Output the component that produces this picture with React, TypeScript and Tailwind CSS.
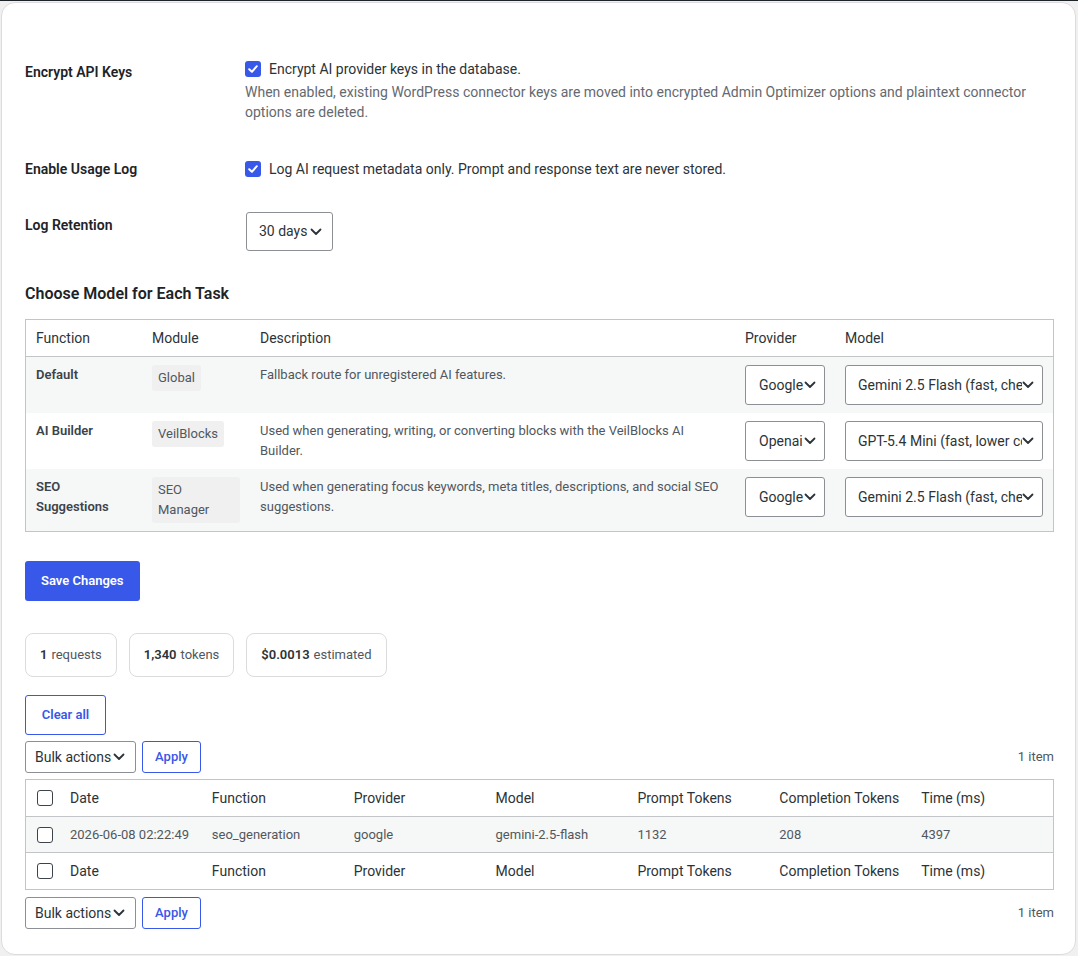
import React from "react";

const font = { fontFamily: "Roboto, 'Noto Sans', sans-serif" };

function Chevron() {
  return (
    <svg width="12" height="8" viewBox="0 0 12 8" className="shrink-0">
      <path d="M1.5 1.5 L6 6 L10.5 1.5" fill="none" stroke="#2c3338" strokeWidth="1.8" strokeLinecap="round" strokeLinejoin="round" />
    </svg>
  );
}

function Checked() {
  return (
    <span className="flex h-[16px] w-[16px] shrink-0 items-center justify-center rounded-[3px] bg-[#3858e9]">
      <svg width="12" height="12" viewBox="0 0 12 12">
        <path d="M2.2 6.2 L4.9 8.8 L9.8 3.2" fill="none" stroke="#fff" strokeWidth="2" strokeLinecap="round" strokeLinejoin="round" />
      </svg>
    </span>
  );
}

function Box() {
  return <span className="block h-[16px] w-[16px] shrink-0 rounded-[3px] border border-[#3c434a] bg-white" />;
}

function Select({ value, className }: { value: string; className: string }) {
  return (
    <div className={`flex items-center rounded-[3px] border border-[#8c8f94] bg-white text-[14px] text-[#2c3338] ${className}`}>
      <span className="min-w-0 flex-1 overflow-hidden whitespace-nowrap">{value}</span>
      <Chevron />
    </div>
  );
}

const models = [
  { fn: "Default", mod: "Global", desc: "Fallback route for unregistered AI features.", prov: "Google", model: "Gemini 2.5 Flash (fast, cheap)", bg: "bg-[#f6f7f7]" },
  { fn: "AI Builder", mod: "VeilBlocks", desc: "Used when generating, writing, or converting blocks with the VeilBlocks AI Builder.", prov: "Openai", model: "GPT-5.4 Mini (fast, lower cost)", bg: "bg-white" },
  { fn: "SEO Suggestions", mod: "SEO Manager", desc: "Used when generating focus keywords, meta titles, descriptions, and social SEO suggestions.", prov: "Google", model: "Gemini 2.5 Flash (fast, cheap)", bg: "bg-[#f6f7f7]" },
];

const logCols = ["Date", "Function", "Provider", "Model", "Prompt Tokens", "Completion Tokens", "Time (ms)"];
const logRow = ["2026-06-08 02:22:49", "seo_generation", "google", "gemini-2.5-flash", "1132", "208", "4397"];

function BulkBar() {
  return (
    <div className="flex items-center gap-[6px]">
      <Select value="Bulk actions" className="h-[32px] w-[111px] pl-[9px] pr-[10px]" />
      <button className="h-[32px] w-[59px] rounded-[3px] border border-[#3858e9] bg-white text-[13px] font-medium text-[#3858e9]">Apply</button>
      <span className="ml-auto text-[13px] text-[#50575e]">1 item</span>
    </div>
  );
}

function LogHeader({ className }: { className: string }) {
  return (
    <div className={`grid grid-cols-[34px_repeat(7,1fr)] items-center text-[14px] text-[#2c3338] ${className}`}>
      <div className="pl-[11px]"><Box /></div>
      {logCols.map((c) => (
        <div key={c} className="pl-[10px]">{c}</div>
      ))}
    </div>
  );
}

export default function App() {
  return (
    <div className="min-h-[956px] bg-[#f0f0f1]" style={font}>
      <div className="h-[1px] bg-[#1d2327]" />
      <div className="ml-[1px] mt-[1px] w-[1075px] rounded-[14px] border border-[#dcdcde] bg-white pb-[25px] pl-[23px] pr-[21px] pt-[56px] text-[#1d2327]">
        {/* settings */}
        <div className="flex">
          <div className="w-[220px] pt-[3px] text-[14px] font-semibold leading-[20px]">Encrypt API Keys</div>
          <div className="flex-1">
            <div className="flex h-[20px] items-center gap-[8px] text-[14px] text-[#2c3338]">
              <Checked />
              <span>Encrypt AI provider keys in the database.</span>
            </div>
            <p className="mt-[3px] text-[14px] leading-[20px] text-[#646970]">
              When enabled, existing WordPress connector keys are moved into encrypted Admin Optimizer options and plaintext connector options are deleted.
            </p>
          </div>
        </div>
        <div className="mt-[37px] flex">
          <div className="w-[220px] text-[14px] font-semibold leading-[20px]">Enable Usage Log</div>
          <div className="flex h-[20px] flex-1 items-center gap-[8px] text-[14px] text-[#2c3338]">
            <Checked />
            <span>Log AI request metadata only. Prompt and response text are never stored.</span>
          </div>
        </div>
        <div className="mt-[33px] flex">
          <div className="w-[220px] pt-[3px] text-[14px] font-semibold leading-[20px]">Log Retention</div>
          <Select value="30 days" className="ml-[1px] h-[39px] w-[87px] gap-[3px] pl-[12px] pr-[10px]" />
        </div>

        <h2 className="mt-[31px] text-[16px] font-semibold leading-[24px]">Choose Model for Each Task</h2>

        <div className="mt-[13px] border border-[#c3c4c7]">
          <div className="grid grid-cols-[116px_108px_485px_100px_1fr] border-b border-[#c3c4c7] text-[14px] leading-[20px] text-[#2c3338]">
            {["Function", "Module", "Description", "Provider", "Model"].map((h) => (
              <div key={h} className="px-[10px] py-[8px]">{h}</div>
            ))}
          </div>
          {models.map((m) => (
            <div key={m.mod} className={`grid grid-cols-[116px_108px_485px_100px_1fr] text-[13px] leading-[20px] ${m.bg}`}>
              <div className="px-[10px] py-[8px] font-semibold text-[#3c434a]">{m.fn}</div>
              <div className="px-[10px] py-[8px]">
                <span className="inline-block rounded-[3px] bg-[#f0f0f1] px-[6px] py-[3px] text-[#50575e]">{m.mod}</span>
              </div>
              <div className="px-[10px] py-[8px] text-[#50575e]">{m.desc}</div>
              <div className="px-[10px] py-[8px]">
                <Select value={m.prov} className="h-[40px] w-[80px] pl-[13px] pr-[8px]" />
              </div>
              <div className="px-[10px] py-[8px]">
                <Select value={m.model} className="h-[40px] w-[198px] pl-[12px] pr-[8px]" />
              </div>
            </div>
          ))}
        </div>

        <button className="mt-[29px] h-[40px] rounded-[3px] bg-[#3858e9] px-[16px] text-[13px] font-semibold text-white">Save Changes</button>

        <div className="mt-[32px] flex gap-[12px] text-[13px] text-[#50575e]">
          <div className="flex h-[44px] items-center rounded-[8px] border border-[#dcdcde] px-[14px]">
            <b className="mr-[4px] font-semibold text-[#2c3338]">1</b>requests
          </div>
          <div className="flex h-[44px] items-center rounded-[8px] border border-[#dcdcde] px-[14px]">
            <b className="mr-[4px] font-semibold text-[#2c3338]">1,340</b>tokens
          </div>
          <div className="flex h-[44px] items-center rounded-[8px] border border-[#dcdcde] px-[14px]">
            <b className="mr-[4px] font-semibold text-[#2c3338]">$0.0013</b>estimated
          </div>
        </div>

        <button className="mt-[18px] h-[40px] w-[81px] rounded-[3px] border border-[#3858e9] bg-white text-[13px] font-semibold text-[#3858e9]">Clear all</button>

        <div className="mt-[6px]">
          <BulkBar />
        </div>

        <div className="mt-[6px] border border-[#c3c4c7]">
          <LogHeader className="h-[37px] border-b border-[#c3c4c7]" />
          <div className="grid h-[36px] grid-cols-[34px_repeat(7,1fr)] items-center border-b border-[#c3c4c7] bg-[#f6f7f7] text-[13px] text-[#50575e]">
            <div className="pl-[11px]"><Box /></div>
            {logRow.map((c) => (
              <div key={c} className="pl-[10px]">{c}</div>
            ))}
          </div>
          <LogHeader className="h-[36px]" />
        </div>

        <div className="mt-[7px]">
          <BulkBar />
        </div>
      </div>
    </div>
  );
}
